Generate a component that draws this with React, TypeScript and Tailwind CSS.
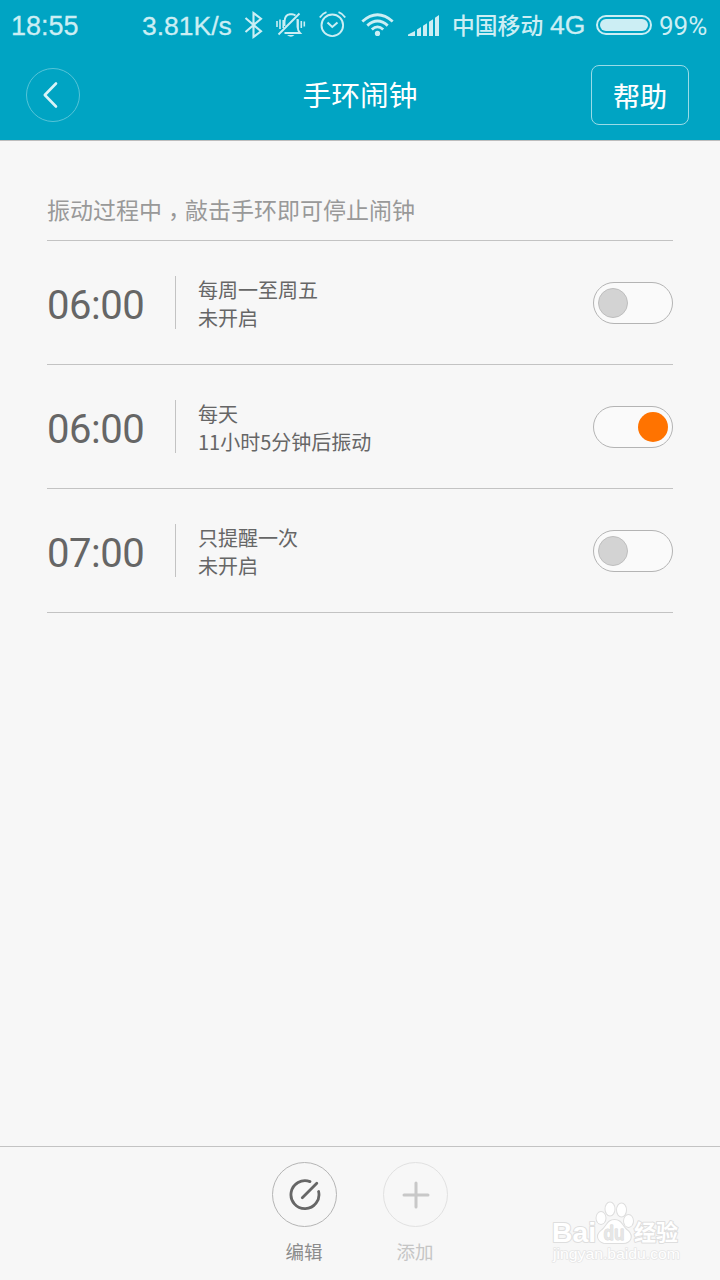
import React, { useState } from 'react';

interface Alarm {
  id: number;
  time: string;
  repeat: string;
  status: string;
  enabled: boolean;
}

const ALARMS: Alarm[] = [
  { id: 1, time: '06:00', repeat: '每周一至周五', status: '未开启', enabled: false },
  { id: 2, time: '06:00', repeat: '每天', status: '11小时5分钟后振动', enabled: true },
  { id: 3, time: '07:00', repeat: '只提醒一次', status: '未开启', enabled: false },
];

function StatusIcons() {
  return (
    <svg width="198" height="36" viewBox="242 8 198 36" fill="none" stroke="currentColor" className="block shrink-0">
      {/* Bluetooth */}
      <path d="M245.5 18 L261 31.3 L253.5 37 V13 L261 18.7 L245.5 32" strokeWidth="2.1" />
      {/* Vibrate / muted bell */}
      <path d="M277 21 V27 M280 19.5 V29 M283.2 20 V28 M298 19.5 V29 M301.3 21 V28 M304.3 21.5 V26.5" strokeWidth="1.6" />
      <path d="M284.5 26 V22 C284.5 17 287 14.5 290 14.2 H292 Q294 14.4 295.5 15.5 M297.5 19 V27 Q298 31 300 33 H284.5 M278.5 34.5 L299.5 13.5" strokeWidth="1.9" />
      <path d="M287 35 H294.5 Q291 38.5 287 35 Z" fill="currentColor" stroke="none" />
      {/* Alarm clock */}
      <circle cx="332.3" cy="25.3" r="10.8" strokeWidth="1.9" />
      <path d="M327.5 22.5 L332.3 27 L337.5 22.5" strokeWidth="2" />
      <path d="M319.8 17.5 Q322.5 13.5 326.5 12.2 M338.5 12.2 Q342.5 13.5 345.2 17.5" strokeWidth="1.9" />
      {/* Wifi */}
      <path d="M362.3 21.5 Q377.5 8 392.7 21.5" strokeWidth="2.8" />
      <path d="M367.3 25.6 Q377.5 16.4 387.7 25.6" strokeWidth="2.8" />
      <path d="M371.8 29.6 Q377.5 24.2 383.2 29.6" strokeWidth="2.8" />
      <circle cx="377.5" cy="33.4" r="2.6" fill="currentColor" stroke="none" />
      {/* Signal bars, clipped along a diagonal */}
      <path
        d="M408 36 V34.5 L415 31 V36 Z M417 36 V29.6 L421 27 V36 Z M423 36 V25.7 L427 23.2 V36 Z M429 36 V21.8 L433 19.2 V36 Z M435 36 V17.8 L439 15 V36 Z"
        fill="currentColor"
        stroke="none"
      />
    </svg>
  );
}

function StatusBar() {
  return (
    <div className="flex h-[50px] items-center pt-0.5 pl-[11px] text-[#cceef4] whitespace-nowrap">
      <span className="w-[131px] shrink-0 font-['Liberation_Sans',sans-serif] text-[27px] leading-9 [-webkit-text-stroke:0.3px]">18:55</span>
      <span className="w-[100px] shrink-0 font-['Liberation_Sans',sans-serif] text-[26.5px] leading-9 [-webkit-text-stroke:0.3px]">3.81K/s</span>
      <StatusIcons />
      <span className="-mt-[3px] ml-3 w-[98px] shrink-0 font-['Noto_Sans_CJK_SC',sans-serif] text-[22.8px] leading-9 font-medium">中国移动</span>
      <span className="-mt-0.5 w-[46px] shrink-0 font-['Liberation_Sans',sans-serif] text-[26.5px] leading-9 [-webkit-text-stroke:0.3px]">4G</span>
      <div className="-mt-0.5 h-5 w-14 shrink-0 rounded-full border-2 border-current p-0.5">
        <div className="h-full rounded-full bg-current" />
      </div>
      <span className="ml-[7px] font-[Roboto,sans-serif] text-[26px] leading-9">99%</span>
    </div>
  );
}

function Header() {
  return (
    <header className="h-[141px] border-b border-[#bdbdbd] bg-[#00a4c3]">
      <StatusBar />
      <div className="grid h-[90px] grid-cols-[1fr_auto_1fr] items-center pr-[31px] pl-[26px]">
        <button className="flex size-[54px] items-center justify-center rounded-full border border-[#56c4d8]">
          <svg width="20" height="28" viewBox="0 0 20 28" fill="none" stroke="#d9f3f7" strokeWidth="2.6" strokeLinecap="round" strokeLinejoin="round" className="mr-1.5">
            <path d="M16 2.5 L4.8 14 L16 25.5" />
          </svg>
        </button>
        <h1 className="-mt-0.5 ml-[5px] text-[28.8px] leading-10 text-white">手环闹钟</h1>
        <button className="flex h-[60px] w-[98px] items-center justify-center justify-self-end rounded-lg border border-[#9adbe7] pt-0.5 text-[27px] leading-10 text-white [-webkit-text-stroke:0.2px]">
          帮助
        </button>
      </div>
    </header>
  );
}

function Toggle({ on, onClick }: { on: boolean; onClick: () => void }) {
  return (
    <button
      onClick={onClick}
      className={`flex h-[42px] w-20 items-center rounded-full border border-[#b4b4b4] bg-[#fafafa] px-1 ${on ? 'justify-end' : 'justify-start'}`}
    >
      <span className={`size-[30px] rounded-full ${on ? 'bg-[#ff7300]' : 'border border-[#bebebe] bg-[#d3d3d3]'}`} />
    </button>
  );
}

function AlarmRow({ alarm, onToggle }: { alarm: Alarm; onToggle: (id: number) => void }) {
  return (
    <li className="flex h-[124px] items-center border-b border-[#c3c3c3]">
      <span className="w-32 pt-1.5 font-[Roboto,sans-serif] text-[40px] leading-10 tracking-[-0.5px] text-[#666]">{alarm.time}</span>
      <div className="h-[53px] w-px bg-[#c3c3c3]" />
      <div className="ml-[22px] flex-1 pt-0.5 text-xl leading-7 text-[#666]">
        <p>{alarm.repeat}</p>
        <p>{alarm.status}</p>
      </div>
      <Toggle on={alarm.enabled} onClick={() => onToggle(alarm.id)} />
    </li>
  );
}

function Watermark() {
  return (
    <svg
      width="140"
      height="70"
      viewBox="545 1200 140 70"
      className="absolute right-[35px] bottom-[10px]"
      fill="#fff"
      stroke="#dedede"
      strokeWidth="2"
      strokeLinejoin="round"
      paintOrder="stroke"
      fontFamily="'Liberation Sans', 'Noto Sans CJK SC', sans-serif"
    >
      <text x="552" y="1242" fontSize="28" fontWeight="bold" textLength="44" lengthAdjust="spacingAndGlyphs">Bai</text>
      <ellipse cx="601" cy="1218" rx="4.5" ry="6" />
      <ellipse cx="610" cy="1209" rx="4.5" ry="6.5" />
      <ellipse cx="621.5" cy="1210" rx="4.5" ry="6.5" />
      <ellipse cx="628.5" cy="1221" rx="4.5" ry="6" />
      <path d="M614.5 1220 C607 1220 607 1227 601 1231 C595 1236 599 1243 606 1243 H623 C631 1243 633 1236 628 1231 C622 1227 622 1220 614.5 1220 Z" />
      <text x="603.5" y="1240" fontSize="20" fontWeight="bold" fill="#e6e6e6" stroke="#d6d6d6" strokeWidth="0.8" textLength="21" lengthAdjust="spacingAndGlyphs">du</text>
      <text x="634" y="1240" fontSize="22" fontWeight="bold" textLength="44" lengthAdjust="spacingAndGlyphs">经验</text>
      <text x="553" y="1259" fontSize="14.5" stroke="#e6e6e6" strokeWidth="1.5" textLength="127" lengthAdjust="spacingAndGlyphs">jingyan.baidu.com</text>
    </svg>
  );
}

function BottomBar() {
  return (
    <footer className="relative flex h-[134px] justify-center gap-[46px] border-t border-[#c3c3c3] pt-[15px]">
      <button className="flex w-[65px] flex-col items-center text-[18.5px] leading-7 text-[#8c8c8c]">
        <span className="mb-[10px] flex size-[65px] items-center justify-center rounded-full border border-[#b5b5b5]">
          <svg width="34" height="34" viewBox="0 0 34 34" fill="none" stroke="#666" strokeLinecap="round">
            <path d="M22 3.6 A14 14 0 1 0 30.6 13.5" strokeWidth="2.8" />
            <path d="M14.3 19.7 L28.8 5.2" strokeWidth="2.8" />
          </svg>
        </span>
        <span className="mr-px">编辑</span>
      </button>
      <button className="flex w-[65px] flex-col items-center text-[18.5px] leading-7 text-[#c5c5c5]">
        <span className="mb-[10px] flex size-[65px] items-center justify-center rounded-full border border-[#e1e1e1]">
          <svg width="28" height="28" viewBox="0 0 28 28" stroke="#c8c8c8" strokeWidth="3" strokeLinecap="round">
            <path d="M14 2 V26 M2 14 H26" />
          </svg>
        </span>
        <span className="mr-px">添加</span>
      </button>
      <Watermark />
    </footer>
  );
}

export default function App() {
  const [alarms, setAlarms] = useState<Alarm[]>(ALARMS);

  const toggleAlarm = (id: number) => {
    setAlarms((list) => list.map((a) => (a.id === id ? { ...a, enabled: !a.enabled } : a)));
  };

  return (
    <div className="flex h-[1280px] w-[720px] flex-col overflow-hidden bg-[#f7f7f7] font-['Noto_Sans_CJK_SC',sans-serif]">
      <Header />
      <main className="flex-1 px-[47px]">
        <p className="flex h-[100px] items-end border-b border-[#c3c3c3] pb-[14px] text-[23px] leading-[34px] text-[#999]">
          <span>振动过程中</span>
          {/* centred comma, lowered to sit on the baseline */}
          <span className="-mb-[6px] font-['Noto_Sans_CJK_TC',sans-serif]">，</span>
          <span>敲击手环即可停止闹钟</span>
        </p>
        <ul>
          {alarms.map((alarm) => (
            <AlarmRow key={alarm.id} alarm={alarm} onToggle={toggleAlarm} />
          ))}
        </ul>
      </main>
      <BottomBar />
    </div>
  );
}
